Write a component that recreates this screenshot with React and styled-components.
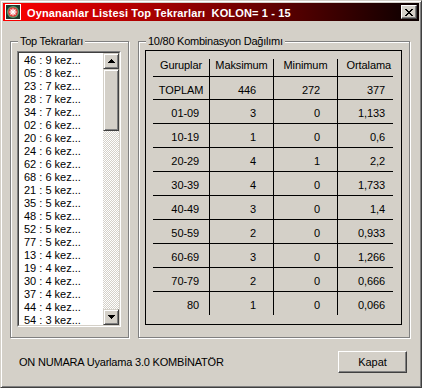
import React from 'react';
import styled, { createGlobalStyle } from 'styled-components';

const Global = createGlobalStyle`
  html, body { margin: 0; padding: 0; background: #d4d0c8; }
  body { font-family: "Liberation Sans", Arial, sans-serif; font-size: 11px; color: #000; }
  * { box-sizing: border-box; }
`;

const Window = styled.div`
  width: 422px;
  height: 388px;
  background: #d4d0c8;
  border: 1px solid;
  border-color: #d4d0c8 #404040 #404040 #d4d0c8;
  box-shadow: inset 1px 1px 0 #fff, inset -1px -1px 0 #808080;
  padding: 2px;
  display: flex;
  flex-direction: column;
`;

const TitleBar = styled.div`
  height: 18px;
  display: flex;
  align-items: center;
  padding-left: 2px;
  background: linear-gradient(to right, #ff0000 0%, #0a0000 100%);
`;

const TitleText = styled.span`
  color: #fff;
  font-weight: bold;
  font-size: 11px;
  line-height: 13px;
  padding-top: 2px;
  margin-left: 6px;
  letter-spacing: 0.15px;
  white-space: pre;
`;

const CloseButton = styled.div`
  margin-left: auto;
  margin-right: 2px;
  width: 16px;
  height: 14px;
  background: #d4d0c8;
  border: 1px solid;
  border-color: #fff #404040 #404040 #fff;
  box-shadow: inset -1px -1px 0 #808080;
  display: flex;
  align-items: center;
  justify-content: center;
`;

const Body = styled.div`
  padding: 20px 9px 0 7px;
  display: flex;
  gap: 9px;
`;

const Group = styled.div`
  position: relative;
  width: ${p => p.$w}px;
  height: 297px;
  border: 1px solid #808080;
  box-shadow: inset 1px 1px 0 #fff, 1px 1px 0 #fff;
  padding: ${p => p.$pad};
`;

const GroupLabel = styled.span`
  position: absolute;
  top: -7px;
  left: 7px;
  padding: 0 2px;
  background: #d4d0c8;
  line-height: 13px;
  letter-spacing: -0.25px;
  white-space: nowrap;
`;

const ListOuter = styled.div`
  width: 104px;
  height: 276px;
  border: 1px solid;
  border-color: #808080 #fff #fff #808080;
`;

const ListInner = styled.div`
  height: 100%;
  border: 1px solid;
  border-color: #404040 #d4d0c8 #d4d0c8 #404040;
  display: flex;
`;

const Items = styled.div`
  flex: 1;
  background: #fff;
  overflow: hidden;
  padding-top: 1px;
`;

const Item = styled.div`
  height: 13px;
  line-height: 13px;
  padding-left: 5px;
  white-space: pre;
`;

const Scrollbar = styled.div`
  width: 16px;
  display: flex;
  flex-direction: column;
`;

const Raised = styled.div`
  flex: none;
  height: ${p => p.$h}px;
  background: #d4d0c8;
  border: 1px solid;
  border-color: #d4d0c8 #404040 #404040 #d4d0c8;
  box-shadow: inset 1px 1px 0 #fff, inset -1px -1px 0 #808080;
  display: flex;
  align-items: center;
  justify-content: center;
`;

const Track = styled.div`
  flex: 1;
  background: repeating-conic-gradient(#d4d0c8 0 25%, #fff 0 50%) 0 0 / 2px 2px;
`;

const TableFrame = styled.div`
  width: 257px;
  height: 275px;
  border: 1px solid #000;
  padding: 8px 8px 0 7px;
`;

const Grid = styled.div`
  display: grid;
  grid-template-columns: 57px 64px 64px 55px;
`;

const Cell = styled.div`
  height: ${p => p.$h}px;
  line-height: 13px;
  padding-top: ${p => p.$pt}px;
  padding-right: ${p => p.$pr || 0}px;
  text-align: ${p => p.$align};
  border-right: ${p => (p.$last ? 'none' : '1px solid #000')};
  border-bottom: ${p => (p.$bottom ? '1px solid #000' : 'none')};
  letter-spacing: -0.1px;
  white-space: nowrap;
`;

const Footer = styled.div`
  display: flex;
  align-items: center;
  justify-content: space-between;
  padding: 13px 12px 0 16px;
`;

const FooterText = styled.span`
  line-height: 13px;
  letter-spacing: -0.2px;
`;

const Button = styled.div`
  width: 69px;
  height: 22px;
  border: 1px solid;
  border-color: #fff #404040 #404040 #fff;
  box-shadow: inset -1px -1px 0 #808080;
  display: flex;
  align-items: center;
  justify-content: center;
  line-height: 13px;
`;

const AppIcon = () => (
  <svg width="16" height="16" viewBox="0 0 16 16" shapeRendering="crispEdges">
    <rect x="0" y="0" width="16" height="16" fill="#fff" />
    <rect x="1" y="1" width="14" height="14" fill="#1f3a2c" />
    <circle cx="8" cy="8" r="6" fill="#5aa070" shapeRendering="auto" />
    <circle cx="8" cy="8" r="4.8" fill="#e03838" shapeRendering="auto" />
    <g stroke="#fff" strokeWidth="1.3" shapeRendering="auto">
      <line x1="8" y1="4.5" x2="8" y2="11.5" />
      <line x1="4.5" y1="8" x2="11.5" y2="8" />
      <line x1="5.5" y1="5.5" x2="10.5" y2="10.5" />
      <line x1="10.5" y1="5.5" x2="5.5" y2="10.5" />
    </g>
  </svg>
);

const CloseIcon = () => (
  <svg width="8" height="7" viewBox="0 0 8 7" shapeRendering="crispEdges">
    <path
      d="M0 0h2v1h1v1h2v-1h1v-1h2v1h-1v1h-1v1h-1v1h1v1h1v1h1v1h-2v-1h-1v-1h-2v1h-1v1h-2v-1h1v-1h1v-1h1v-1h-1v-1h-1v-1h-1z"
      fill="#000"
    />
  </svg>
);

const Arrow = ({ down }) => (
  <svg width="7" height="4" viewBox="0 0 7 4" shapeRendering="crispEdges">
    {down ? (
      <path d="M0 0h7v1h-1v1h-1v1h-1v1h-1v-1h-1v-1h-1v-1h-1z" fill="#000" />
    ) : (
      <path d="M3 0h1v1h1v1h1v1h1v1h-7v-1h1v-1h1v-1h1z" fill="#000" />
    )}
  </svg>
);

const items = [
  '46 : 9 kez...', '05 : 8 kez...', '23 : 7 kez...', '28 : 7 kez...', '34 : 7 kez...',
  '02 : 6 kez...', '20 : 6 kez...', '24 : 6 kez...', '62 : 6 kez...', '68 : 6 kez...',
  '21 : 5 kez...', '35 : 5 kez...', '48 : 5 kez...', '52 : 5 kez...', '77 : 5 kez...',
  '13 : 4 kez...', '19 : 4 kez...', '30 : 4 kez...', '37 : 4 kez...', '44 : 4 kez...',
  '54 : 3 kez...',
];

const rows = [
  ['01-09', '3', '0', '1,133'],
  ['10-19', '1', '0', '0,6'],
  ['20-29', '4', '1', '2,2'],
  ['30-39', '4', '0', '1,733'],
  ['40-49', '3', '0', '1,4'],
  ['50-59', '2', '0', '0,933'],
  ['60-69', '3', '0', '1,266'],
  ['70-79', '2', '0', '0,666'],
  ['80', '1', '0', '0,066'],
];

export default function App() {
  return (
    <>
      <Global />
      <Window>
        <TitleBar>
          <AppIcon />
          <TitleText>{'Oynananlar Listesi Top Tekrarları  KOLON= 1 - 15'}</TitleText>
          <CloseButton>
            <CloseIcon />
          </CloseButton>
        </TitleBar>
        <Body>
          <Group $w={119} $pad="9px 0 0 6px">
            <GroupLabel>Top Tekrarları</GroupLabel>
            <ListOuter>
              <ListInner>
                <Items>
                  {items.map(t => (
                    <Item key={t}>{t}</Item>
                  ))}
                </Items>
                <Scrollbar>
                  <Raised $h={16}><Arrow /></Raised>
                  <Raised $h={62} />
                  <Track />
                  <Raised $h={16}><Arrow down /></Raised>
                </Scrollbar>
              </ListInner>
            </ListOuter>
          </Group>
          <Group $w={272} $pad="8px 0 0 6px">
            <GroupLabel>10/80 Kombinasyon Dağılımı</GroupLabel>
            <TableFrame>
              <Grid>
                <Cell $h={18} $pt={0} $align="center" $bottom>Guruplar</Cell>
                <Cell $h={18} $pt={0} $align="center" $bottom>Maksimum</Cell>
                <Cell $h={18} $pt={0} $align="center" $bottom>Minimum</Cell>
                <Cell $h={18} $pt={0} $align="right" $pr={2} $last $bottom>Ortalama</Cell>

                <Cell $h={23} $pt={7} $align="center" $bottom>TOPLAM</Cell>
                <Cell $h={23} $pt={7} $align="right" $pr={17} $bottom>446</Cell>
                <Cell $h={23} $pt={7} $align="right" $pr={17} $bottom>272</Cell>
                <Cell $h={23} $pt={7} $align="right" $pr={8} $last $bottom>377</Cell>

                {rows.map((r, i) => {
                  const last = i === rows.length - 1;
                  const h = last ? 23 : 24;
                  return (
                    <React.Fragment key={r[0]}>
                      <Cell $h={h} $pt={7} $align="right" $pr={10} $bottom={!last}>{r[0]}</Cell>
                      <Cell $h={h} $pt={7} $align="right" $pr={17} $bottom={!last}>{r[1]}</Cell>
                      <Cell $h={h} $pt={7} $align="right" $pr={17} $bottom={!last}>{r[2]}</Cell>
                      <Cell $h={h} $pt={7} $align="right" $pr={8} $last $bottom={!last}>{r[3]}</Cell>
                    </React.Fragment>
                  );
                })}
              </Grid>
            </TableFrame>
          </Group>
        </Body>
        <Footer>
          <FooterText>ON NUMARA Uyarlama 3.0 KOMBİNATÖR</FooterText>
          <Button>Kapat</Button>
        </Footer>
      </Window>
    </>
  );
}
